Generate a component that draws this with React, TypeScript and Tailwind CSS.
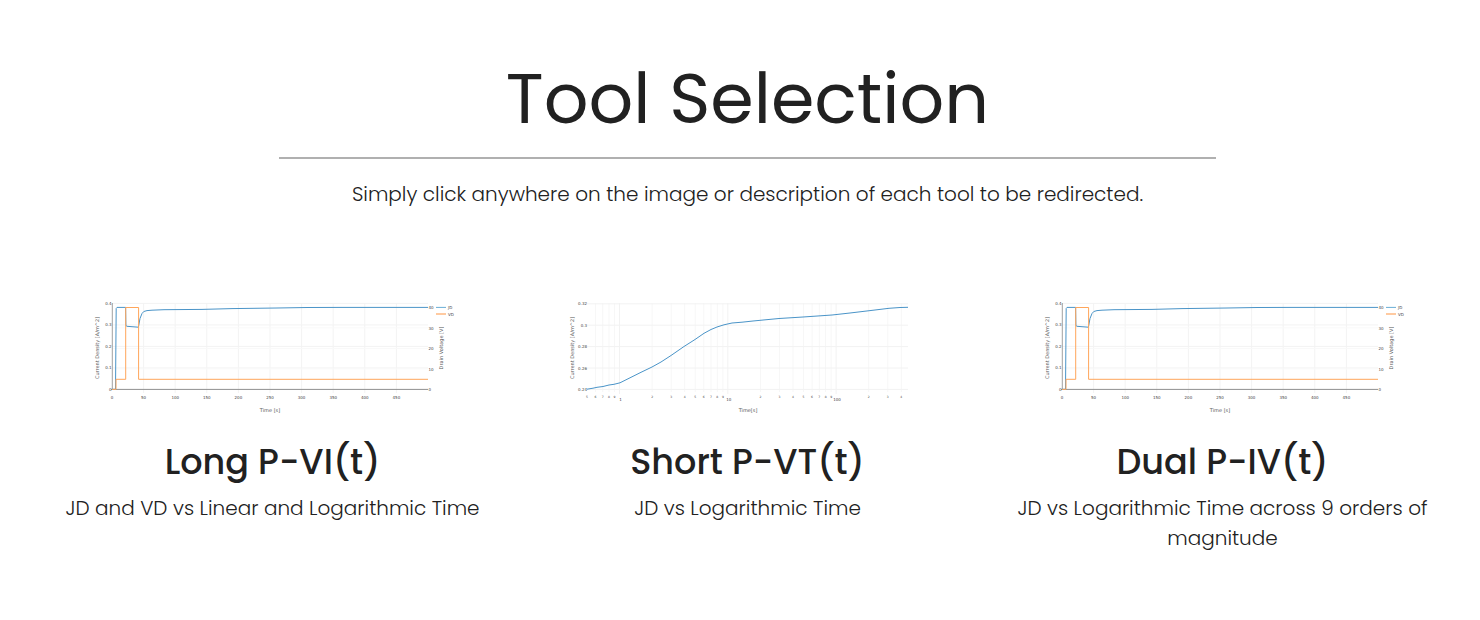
import React from "react";

const chartText = "fill-[#555] font-['DejaVu_Sans',sans-serif]";

const timeTicks = [0, 50, 100, 150, 200, 250, 300, 350, 400, 450];
const densityTicks = ["0", "0.1", "0.2", "0.3", "0.4"];
const voltageTicks = ["0", "10", "20", "30", "40"];

function AxisTitle({ x, y, vertical, children }: { x: number; y: number; vertical?: boolean; children: string }) {
  return (
    <text
      x={x}
      y={y}
      textAnchor="middle"
      transform={vertical ? `rotate(-90 ${x} ${y})` : undefined}
      className={`${chartText} text-[5px]`}
    >
      {children}
    </text>
  );
}

function Tick({ x, y, anchor = "middle", children }: { x: number; y: number; anchor?: "start" | "middle" | "end"; children: string | number }) {
  return (
    <text x={x} y={y} textAnchor={anchor} className="fill-[#444] text-[4px] font-['DejaVu_Sans',sans-serif]">
      {children}
    </text>
  );
}

function LinearChart({ label }: { label: string }) {
  return (
    <svg viewBox="0 0 381 130" role="img" aria-label={label} className="block w-[381px] max-w-full">
      <g stroke="#f3f3f3" strokeWidth="1">
        {timeTicks.slice(1).map((t) => (
          <line key={t} x1={30 + t * 0.632} x2={30 + t * 0.632} y1="13" y2="103" />
        ))}
        {[1, 2, 3, 4].map((i) => (
          <line key={i} x1="30" x2="346" y1={99.4 - i * 21.5} y2={99.4 - i * 21.5} />
        ))}
        {[1, 2, 3].map((i) => (
          <line key={i} x1="30" x2="346" y1={99.4 - i * 20.5} y2={99.4 - i * 20.5} stroke="#f9f9f9" />
        ))}
      </g>
      <path d="M30.3 13V99.5" stroke="#a0a0a0" />
      <path d="M29 99.4H346" stroke="#909090" />
      <path
        d="M30 99.3H33.5L34.2 18.5L35 17.4H43.6L43.9 35.5L45 36.3L56.4 37.2L58 28.5L60 23.5L61.8 21.5L65 20.6L70 20.2L82 19.7L120 19.4L150 18.6L195 18L225 17.5L260 17.4H346"
        fill="none"
        stroke="#4a94c8"
      />
      <path d="M30 99.4H34V89.3H43.7V17.5H56.6V89.3H346" fill="none" stroke="#ffa55a" />
      {timeTicks.map((t) => (
        <Tick key={t} x={30 + t * 0.632} y={108.5}>{t}</Tick>
      ))}
      {densityTicks.map((t, i) => (
        <Tick key={t} x={29.5} y={100.6 - i * 21.5} anchor="end">{t}</Tick>
      ))}
      {voltageTicks.map((t, i) => (
        <Tick key={t} x={346.5} y={101 - i * 20.5} anchor="start">{t}</Tick>
      ))}
      <path d="M354 17.4H364" stroke="#6aaed6" />
      <path d="M354 24H364" stroke="#ffb980" strokeWidth="1.5" />
      <Tick x={366} y={19} anchor="start">JD</Tick>
      <Tick x={366} y={25.5} anchor="start">VD</Tick>
      <AxisTitle x={17} y={58} vertical>Current Density [A/m^2]</AxisTitle>
      <AxisTitle x={361} y={58} vertical>Drain Voltage [V]</AxisTitle>
      <AxisTitle x={188} y={121.5}>Time [s]</AxisTitle>
    </svg>
  );
}

// Horizontal position of a time value on the logarithmic axis.
const logX = (t: number) => 62.5 + Math.log10(t) * 108.3;

const minorTimes = [0.5, 0.6, 0.7, 0.8, 0.9, 2, 3, 4, 5, 6, 7, 8, 9, 20, 30, 40, 50, 60, 70, 80, 90, 200, 300, 400];
const majorTimes = [1, 10, 100];
const logDensityTicks = ["0.24", "0.26", "0.28", "0.3", "0.32"];

function LogChart({ label }: { label: string }) {
  return (
    <svg viewBox="0 0 381 130" role="img" aria-label={label} className="block w-[381px] max-w-full">
      <g stroke="#f7f7f7">
        {minorTimes.slice(1).map((t) => (
          <line key={t} x1={logX(t)} x2={logX(t)} y1="13" y2="102" />
        ))}
      </g>
      <g stroke="#f2f2f2">
        {majorTimes.map((t) => (
          <line key={t} x1={logX(t)} x2={logX(t)} y1="13" y2="104" />
        ))}
        {logDensityTicks.map((t, i) => (
          <line key={t} x1="30" x2="351" y1={99.4 - i * 21.4} y2={99.4 - i * 21.4} />
        ))}
      </g>
      <path
        d="M30 99.2L36 98.2L40 97.3L46 96.5L52 95L57 94.3L63 92.8L73 87.8L84 82.3L95 77L104 72L114 65.5L127 56.5L138 49.5L147 43.3L154 39.5L160 37L167 34.8L175 33L185 32.2L196 31L222 28.5L246 27L275 25L293 23L318 20L332 18.3L343 17.5L351 17.3"
        fill="none"
        stroke="#4a94c8"
      />
      {minorTimes.map((t) => (
        <text key={t} x={logX(t)} y={107.5} textAnchor="middle" className="fill-[#444] text-[3px] font-['DejaVu_Sans',sans-serif]">
          {String(t).replace("0.", "").charAt(0)}
        </text>
      ))}
      {majorTimes.map((t) => (
        <Tick key={t} x={logX(t) + 1} y={110.5}>{t}</Tick>
      ))}
      {logDensityTicks.map((t, i) => (
        <Tick key={t} x={30} y={101 - i * 21.4} anchor="end">{t}</Tick>
      ))}
      <AxisTitle x={17} y={58} vertical>Current Density [A/m^2]</AxisTitle>
      <AxisTitle x={191} y={121.5}>Time[s]</AxisTitle>
    </svg>
  );
}

const tools = [
  { href: "#long-p-vi", title: "Long P-VI(t)", text: "JD and VD vs Linear and Logarithmic Time", Chart: LinearChart },
  { href: "#short-p-vt", title: "Short P-VT(t)", text: "JD vs Logarithmic Time", Chart: LogChart },
  { href: "#dual-p-iv", title: "Dual P-IV(t)", text: "JD vs Logarithmic Time across 9 orders of magnitude", Chart: LinearChart },
];

export default function App() {
  return (
    <main className="bg-white pt-10 pr-5 pb-16 pl-[35px] text-center font-['Poppins','Inter',sans-serif] text-[#212121]">
      <header className="flex flex-col items-center px-[244px]">
        <h1 className="text-[70px] leading-[117px] font-normal">Tool Selection</h1>
        <hr className="w-full border-0 border-t-2 border-[#b0b0b0]" />
        <p className="mt-5 text-[20px] leading-[30px] font-light">
          Simply click anywhere on the image or description of each tool to be redirected.
        </p>
      </header>
      <section className="mt-[81px] grid grid-cols-3">
        {tools.map(({ href, title, text, Chart }) => (
          <a key={href} href={href} className="flex flex-col items-center px-6">
            <Chart label={title} />
            <h2 className="mt-[20px] text-[35px] leading-[44px] font-medium">{title}</h2>
            <p className="mt-[9px] text-[20px] leading-[30px] font-light">{text}</p>
          </a>
        ))}
      </section>
    </main>
  );
}
